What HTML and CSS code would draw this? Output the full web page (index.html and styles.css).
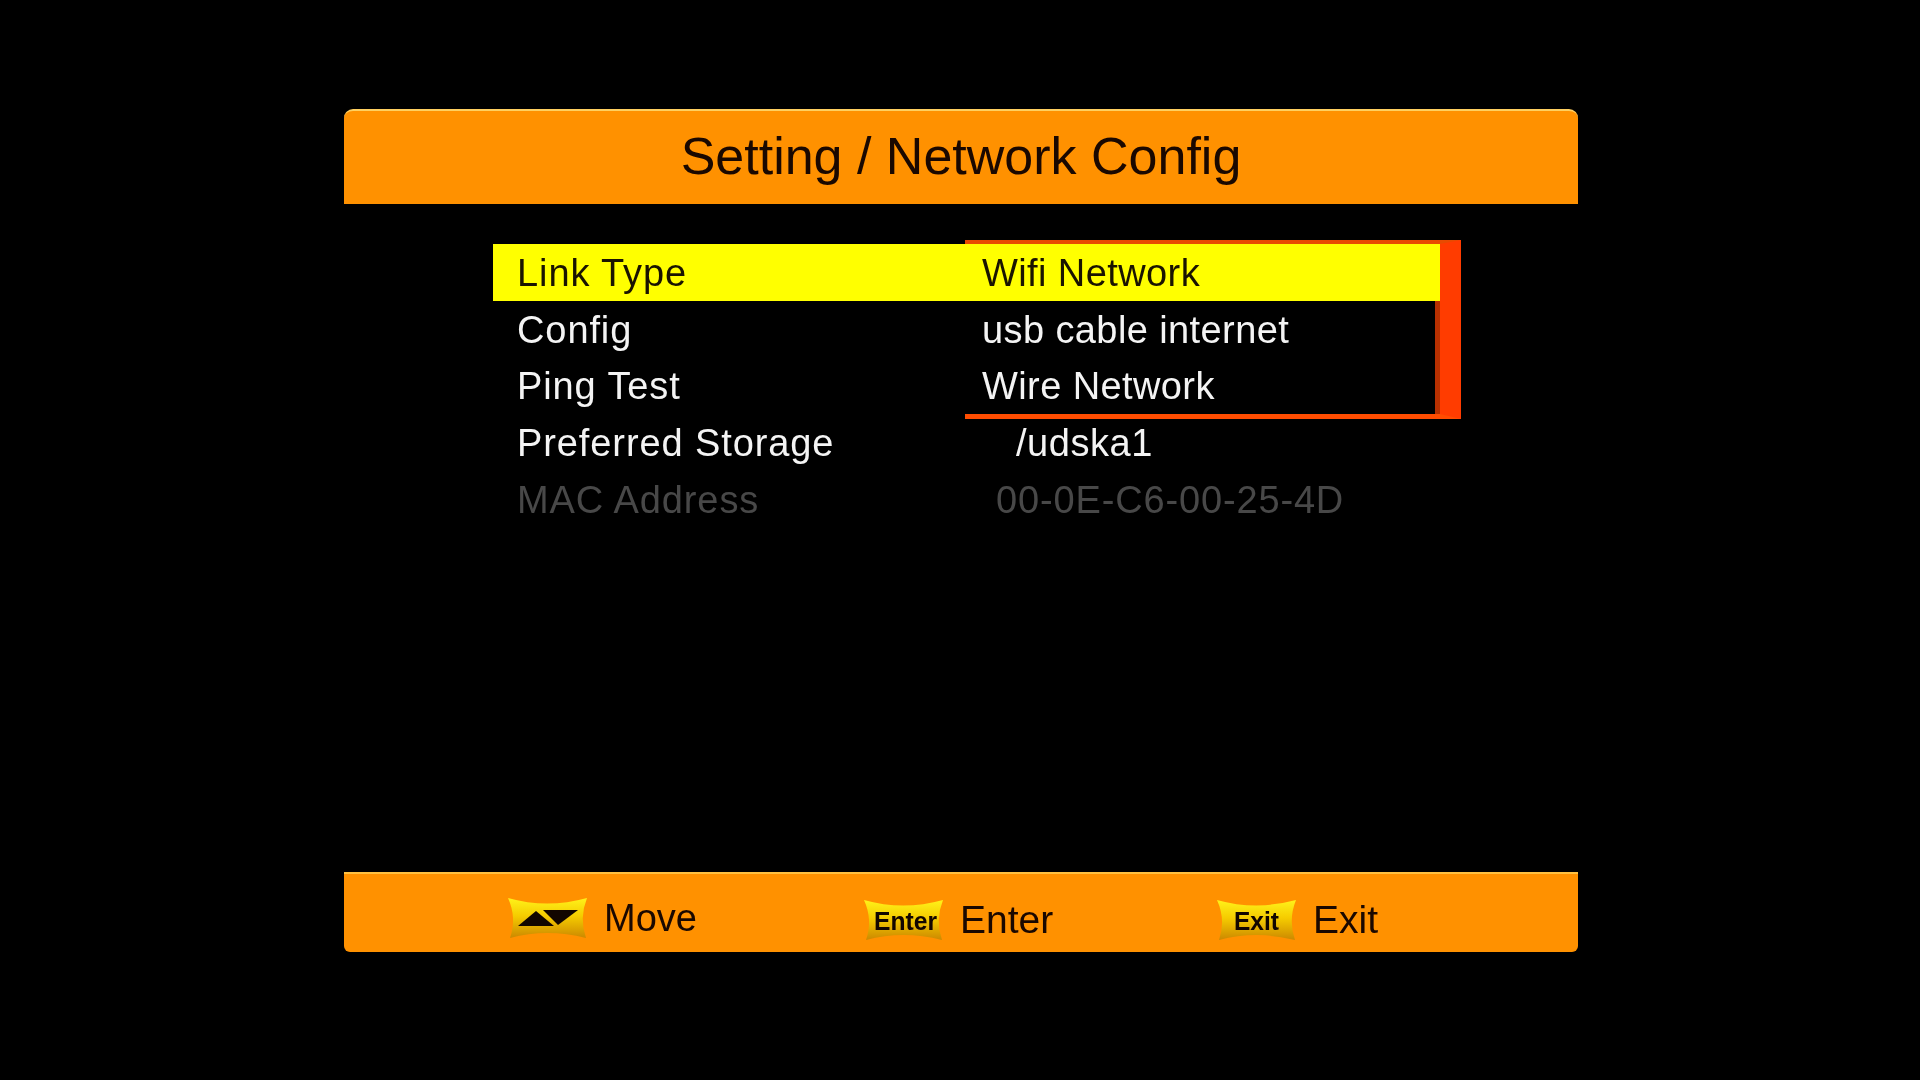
FILE: index.html
```html
<!DOCTYPE html>
<html lang="en">
<head>
    <meta charset="UTF-8">
    <title>Network Config</title>
    <link rel="stylesheet" href="styles.css">
</head>
<body>

    <div class="screen">
        <div class="title-bar"><span>Setting / Network Config</span></div>

        <div class="menu">
            <div class="row selected"><span class="label">Link Type</span><span class="value">Wifi Network</span></div>
            <div class="row"><span class="label">Config</span><span class="value">usb cable internet</span></div>
            <div class="row"><span class="label">Ping Test</span><span class="value">Wire Network</span></div>
            <div class="row"><span class="label">Preferred Storage</span><span class="value storage">/udska1</span></div>
            <div class="row disabled"><span class="label">MAC Address</span><span class="value mac">00-0E-C6-00-25-4D</span></div>
            <div class="popup"></div>
        </div>

        <div class="help-bar">
            <div class="help move">
                <svg class="key" viewBox="0 0 79 40">
                    <defs>
                        <linearGradient id="keyFill" x1="0" y1="0" x2="0" y2="1">
                            <stop offset="0" stop-color="#fff21a"/>
                            <stop offset="0.45" stop-color="#f5cc00"/>
                            <stop offset="1" stop-color="#cc8800"/>
                        </linearGradient>
                    </defs>
                    <path d="M0 0 Q39 11 79 0 Q71 20 78 40 Q39 30 2 40 Q9 20 0 0Z" fill="url(#keyFill)"/>
                    <path d="M10 28 L28 13 L46 28Z" fill="#120600"/>
                    <path d="M35 12 L70 12 L50 27Z" fill="#120600"/>
                </svg>
                <span>Move</span>
            </div>
            <div class="help enter">
                <svg class="key" viewBox="0 0 79 40">
                    <path d="M0 0 Q39 11 79 0 Q71 20 78 40 Q39 30 2 40 Q9 20 0 0Z" fill="url(#keyFill)"/>
                    <text x="10" y="30" textLength="63" lengthAdjust="spacingAndGlyphs" class="key-text">Enter</text>
                </svg>
                <span>Enter</span>
            </div>
            <div class="help exit">
                <svg class="key" viewBox="0 0 79 40">
                    <path d="M0 0 Q39 11 79 0 Q71 20 78 40 Q39 30 2 40 Q9 20 0 0Z" fill="url(#keyFill)"/>
                    <text x="17" y="30" textLength="45" lengthAdjust="spacingAndGlyphs" class="key-text">Exit</text>
                </svg>
                <span>Exit</span>
            </div>
        </div>
    </div>

</body>
</html>
```

FILE: styles.css
```css
/* Page */
body {
    margin: 0;
    height: 100vh;
    background: #000;
    font-family: "Liberation Sans", Arial, sans-serif;
    overflow: hidden;
}

.screen {
    width: 1234px;
    height: 843px;
    margin: 109px 0 0 344px;
    display: flex;
    flex-direction: column;
}

/* Title */
.title-bar {
    height: 95px;
    line-height: 91px;
    background: #ff9100;
    border-top: 2px solid #ffd060;
    box-sizing: border-box;
    border-radius: 9px 9px 0 0;
    color: #1a0800;
    font-size: 52px;
    text-align: center;
}

.title-bar span {
    display: inline-block;
    filter: blur(0.6px);
}

/* Menu */
.menu {
    position: relative;
    margin-top: 40px;
    margin-left: 149px;
    width: 947px;
}

.row {
    position: relative;
    z-index: 1;
    display: flex;
    height: 56.7px;
    line-height: 58px;
    padding-left: 24px;
    color: #f4f4f4;
    font-size: 38px;
}

.label {
    width: 465px;
    flex: none;
    letter-spacing: 0.9px;
    filter: blur(0.6px);
}

.value {
    letter-spacing: 0.4px;
    filter: blur(0.6px);
}

.storage {
    margin-left: 34px;
    letter-spacing: 0.55px;
}

.mac {
    margin-left: 14px;
    letter-spacing: 0.85px;
}

.selected {
    background: #ffff00;
    color: #1a1400;
}

.disabled {
    color: #484848;
}

/* Dropdown frame around the link types */
.popup {
    position: absolute;
    top: -4px;
    left: 472px;
    width: 496px;
    height: 179px;
    box-sizing: border-box;
    border-top: 4px solid #e84a00;
    border-bottom: 5px solid #ff4c00;
    border-right: 21px solid #ff3c00;
}

.popup::after {
    content: "";
    position: absolute;
    top: 57px;
    right: 0;
    bottom: 0;
    width: 5px;
    background: #b83000;
}

/* Bottom help bar */
.help-bar {
    margin-top: auto;
    height: 80px;
    box-sizing: border-box;
    padding: 14px 0 0 164px;
    display: flex;
    align-items: center;
    background: #ff9100;
    border-top: 2px solid #ffc040;
    border-radius: 0 0 6px 6px;
    color: #1a0800;
    font-size: 38px;
}

.help {
    display: flex;
    align-items: center;
    gap: 17px;
    flex: none;
}

.help span {
    filter: blur(0.6px);
}

.move {
    width: 356px;
    margin-top: -4px;
}

.enter {
    width: 353px;
    font-size: 39px;
}

.exit {
    margin-top: -1px;
    font-size: 39px;
}

.key {
    width: 79px;
    height: 40px;
    flex: none;
    filter: blur(0.7px);
}

.key-text {
    font-size: 26px;
    font-weight: bold;
    fill: #120600;
}
```
